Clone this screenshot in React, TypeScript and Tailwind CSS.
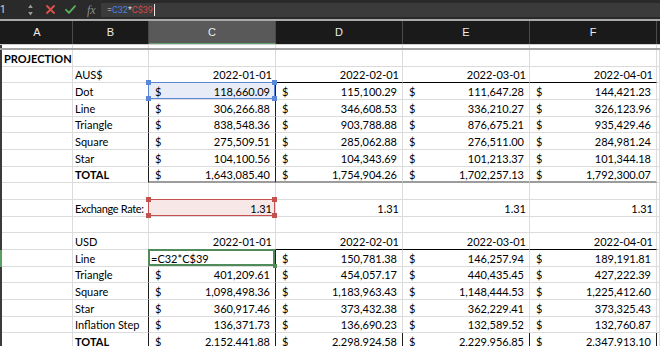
import React from 'react';

type Kind = 'blank' | 'title' | 'head' | 'data' | 'total' | 'rate' | 'active' | 'usdtotal';
type Sel = 'blue' | 'red' | 'green';

type Spec = {
  kind: Kind;
  label?: string;
  vals?: string[];
  sel?: Sel;
};

const W = ['w-[71px]', 'w-[76px]', 'w-[127px]', 'w-[127px]', 'w-[127px]', 'w-[127px]'];
const dates = ['2022-01-01', '2022-02-01', '2022-03-01', '2022-04-01'];

const rows: Spec[] = [
  { kind: 'title', label: 'PROJECTION' },
  { kind: 'head', label: 'AUS$', vals: dates },
  { kind: 'data', label: 'Dot', vals: ['118,660.09', '115,100.29', '111,647.28', '144,421.23'], sel: 'blue' },
  { kind: 'data', label: 'Line', vals: ['306,266.88', '346,608.53', '336,210.27', '326,123.96'] },
  { kind: 'data', label: 'Triangle', vals: ['838,548.36', '903,788.88', '876,675.21', '935,429.46'] },
  { kind: 'data', label: 'Square', vals: ['275,509.51', '285,062.88', '276,511.00', '284,981.24'] },
  { kind: 'data', label: 'Star', vals: ['104,100.56', '104,343.69', '101,213.37', '101,344.18'] },
  { kind: 'total', label: 'TOTAL', vals: ['1,643,085.40', '1,754,904.26', '1,702,257.13', '1,792,300.07'] },
  { kind: 'blank' },
  { kind: 'rate', label: 'Exchange Rate:', vals: ['1.31', '1.31', '1.31', '1.31'], sel: 'red' },
  { kind: 'blank' },
  { kind: 'head', label: 'USD', vals: dates },
  { kind: 'active', label: 'Line', vals: ['=C32*C$39', '150,781.38', '146,257.94', '189,191.81'], sel: 'green' },
  { kind: 'data', label: 'Triangle', vals: ['401,209.61', '454,057.17', '440,435.45', '427,222.39'] },
  { kind: 'data', label: 'Square', vals: ['1,098,498.36', '1,183,963.43', '1,148,444.53', '1,225,412.60'] },
  { kind: 'data', label: 'Star', vals: ['360,917.46', '373,432.38', '362,229.41', '373,325.43'] },
  { kind: 'data', label: 'Inflation Step', vals: ['136,371.73', '136,690.23', '132,589.52', '132,760.87'] },
  { kind: 'usdtotal', label: 'TOTAL', vals: ['2,152,441.88', '2,298,924.58', '2,229,956.85', '2,347,913.10'] },
];

function Overlay({ sel }: { sel: Sel }) {
  if (sel === 'green') {
    return (
      <div className="pointer-events-none absolute -left-[1px] -top-[1px] right-0 bottom-0 z-10 border-2 border-[#4f8c5a]">
        <span className="absolute -right-[4px] -bottom-[4px] h-[4px] w-[4px] bg-[#4f8c5a]" />
      </div>
    );
  }
  const box = sel === 'blue' ? 'border-[#5a87d8]' : 'border-[#c4504f]';
  const dot = sel === 'blue' ? 'bg-[#5a87d8]' : 'bg-[#c4504f]';
  return (
    <div className={`pointer-events-none absolute -left-[1px] -top-[1px] right-0 bottom-0 z-10 border ${box}`}>
      <span className={`absolute -left-[3px] -top-[3px] h-[5px] w-[5px] ${dot}`} />
      <span className={`absolute -right-[3px] -top-[3px] h-[5px] w-[5px] ${dot}`} />
      <span className={`absolute -left-[3px] -bottom-[3px] h-[5px] w-[5px] ${dot}`} />
      <span className={`absolute -right-[3px] -bottom-[3px] h-[5px] w-[5px] ${dot}`} />
    </div>
  );
}

function Cell({
  w,
  r = 'border-r-[#dcdcdc]',
  b = 'border-b border-b-[#dcdcdc]',
  bg = '',
  sel,
  children,
}: {
  w: string;
  r?: string;
  b?: string;
  bg?: string;
  sel?: Sel;
  children?: React.ReactNode;
}) {
  return (
    <div className={`relative flex h-full shrink-0 items-center whitespace-nowrap border-r pt-[1px] ${w} ${r} ${b} ${bg}`}>
      {children}
      {sel && <Overlay sel={sel} />}
    </div>
  );
}

function Money({ v }: { v: string }) {
  return (
    <div className="flex w-full justify-between pl-[6px] pr-[5px]">
      <span>$</span>
      <span>{v}</span>
    </div>
  );
}

function Row({ s }: { s: Spec }) {
  const boxed = s.kind === 'data' || s.kind === 'total' || s.kind === 'active' || s.kind === 'usdtotal';
  const darkR = 'border-r-[#1e1e1e]';
  const bold = s.kind === 'total' || s.kind === 'usdtotal';
  return (
    <div className="flex h-[16.67px]">
      <div className={`w-[2px] shrink-0 ${s.kind === 'active' ? 'bg-[#5a9e64]' : 'bg-[#3b3b3b]'}`} />
      <Cell w={W[0]}>{s.kind === 'title' && <span className="pl-[2px] font-bold">{s.label}</span>}</Cell>
      <Cell w={W[1]} r={boxed ? darkR : undefined}>
        {s.kind !== 'title' && s.label && (
          <span className={`pl-[2px] ${bold ? 'font-bold' : ''} ${s.kind === 'rate' ? 'tracking-[-0.35px]' : ''}`}>
            {s.label}
          </span>
        )}
      </Cell>
      {[0, 1, 2, 3].map((i) => {
        const v = s.vals?.[i];
        const isC = i === 0;
        let r: string | undefined;
        let b: string | undefined;
        let bg = '';
        let content: React.ReactNode = null;
        if (s.kind === 'head') {
          b = 'border-b border-b-black';
          content = <span className="ml-auto pr-[3px]">{v}</span>;
        } else if (s.kind === 'rate') {
          if (isC) bg = 'bg-[#f7e8e7]';
          content = <span className="ml-auto pr-[3px]">{v}</span>;
        } else if (boxed) {
          if (isC) r = darkR;
          if (s.kind === 'usdtotal') r = darkR;
          if (s.kind === 'total') b = 'border-b-2 border-b-[#9c9c9c]';
          if (s.kind === 'active' && isC) {
            content = <span className="pl-[2px]">{v}</span>;
          } else {
            content = <Money v={v ?? ''} />;
          }
          if (s.sel === 'blue' && isC) bg = 'bg-[#e7ecf6]';
        }
        return (
          <Cell key={i} w={W[i + 2]} r={r} b={b} bg={bg} sel={isC ? s.sel : undefined}>
            {content}
          </Cell>
        );
      })}
      <Cell w="w-[3px]" />
    </div>
  );
}

function FormulaBar() {
  return (
    <div className="flex h-[19px] shrink-0 bg-[#2a2a2a] font-['Roboto',sans-serif]">
      <div className="flex w-[38px] shrink-0 items-center overflow-hidden">
        <span className="text-[10px] text-[#d8d8d8]">1</span>
        <svg className="ml-auto mr-[5px]" width="5" height="12" viewBox="0 0 5 12">
          <path d="M2.5 0.5 L4.8 4 L0.2 4 Z" fill="#9a9a9a" />
          <path d="M2.5 11.5 L4.8 8 L0.2 8 Z" fill="#9a9a9a" />
        </svg>
      </div>
      <div className="flex w-[63px] shrink-0 items-center">
        <svg className="ml-[8px]" width="9" height="9" viewBox="0 0 9 9">
          <path d="M1 1 L8 8 M8 1 L1 8" stroke="#e0504b" strokeWidth="1.8" strokeLinecap="round" />
        </svg>
        <svg className="ml-[10px]" width="11" height="9" viewBox="0 0 11 9">
          <path d="M1 4.8 L4 7.8 L10 1.2" stroke="#56b35c" strokeWidth="1.8" fill="none" strokeLinecap="round" strokeLinejoin="round" />
        </svg>
        <span className="ml-[11px] font-['Liberation_Serif',serif] text-[12px] italic leading-none text-[#8c8c8c]">fx</span>
      </div>
      <div className="mb-[2px] mt-[3px] flex flex-1 items-center bg-[#3b3b3b] pl-[6px] text-[9px] leading-none">
        <span className="text-[#cfcfcf]">=</span>
        <span className="text-[#4a80dc]">C32</span>
        <span className="text-[#d8d8d8]">*</span>
        <span className="text-[#d24a4a]">C$39</span>
        <span className="ml-[1px] h-[12px] w-[1px] bg-[#e8e8e8]" />
      </div>
    </div>
  );
}

function Headers() {
  const letters = ['A', 'B', 'C', 'D', 'E', 'F'];
  return (
    <div className="flex h-[24px] shrink-0 border-b border-b-[#cfcfcf] bg-[#1a1a1a] font-['Liberation_Sans',sans-serif] text-[11px] text-[#ececec]">
      <div className="w-[2px] shrink-0" />
      {letters.map((l, i) => (
        <div
          key={l}
          className={`flex h-full shrink-0 items-center justify-center border-r border-r-[#4a4a4a] ${W[i]} ${
            l === 'C' ? 'border-b border-b-[#63a36b] bg-[#595959]' : ''
          }`}
        >
          {l}
        </div>
      ))}
      <div className="w-[3px] shrink-0" />
    </div>
  );
}

export default function App() {
  return (
    <div className="flex h-[346px] w-[660px] flex-col overflow-hidden bg-white">
      <FormulaBar />
      <div className="h-[2px] shrink-0 bg-[#a9a9a9]" />
      <Headers />
      <div className="flex h-[3px] shrink-0">
        <div className="w-[2px] shrink-0 bg-[#3b3b3b]" />
        {W.map((w, i) => (
          <div key={i} className={`h-full shrink-0 border-r border-r-[#dcdcdc] ${w}`} />
        ))}
      </div>
      <div className="h-[2px] shrink-0 bg-[#a3a3a3]" />
      <div className="font-['Lato',sans-serif] text-[11px] leading-none text-black">
        {rows.map((s, i) => (
          <Row key={i} s={s} />
        ))}
      </div>
    </div>
  );
}
